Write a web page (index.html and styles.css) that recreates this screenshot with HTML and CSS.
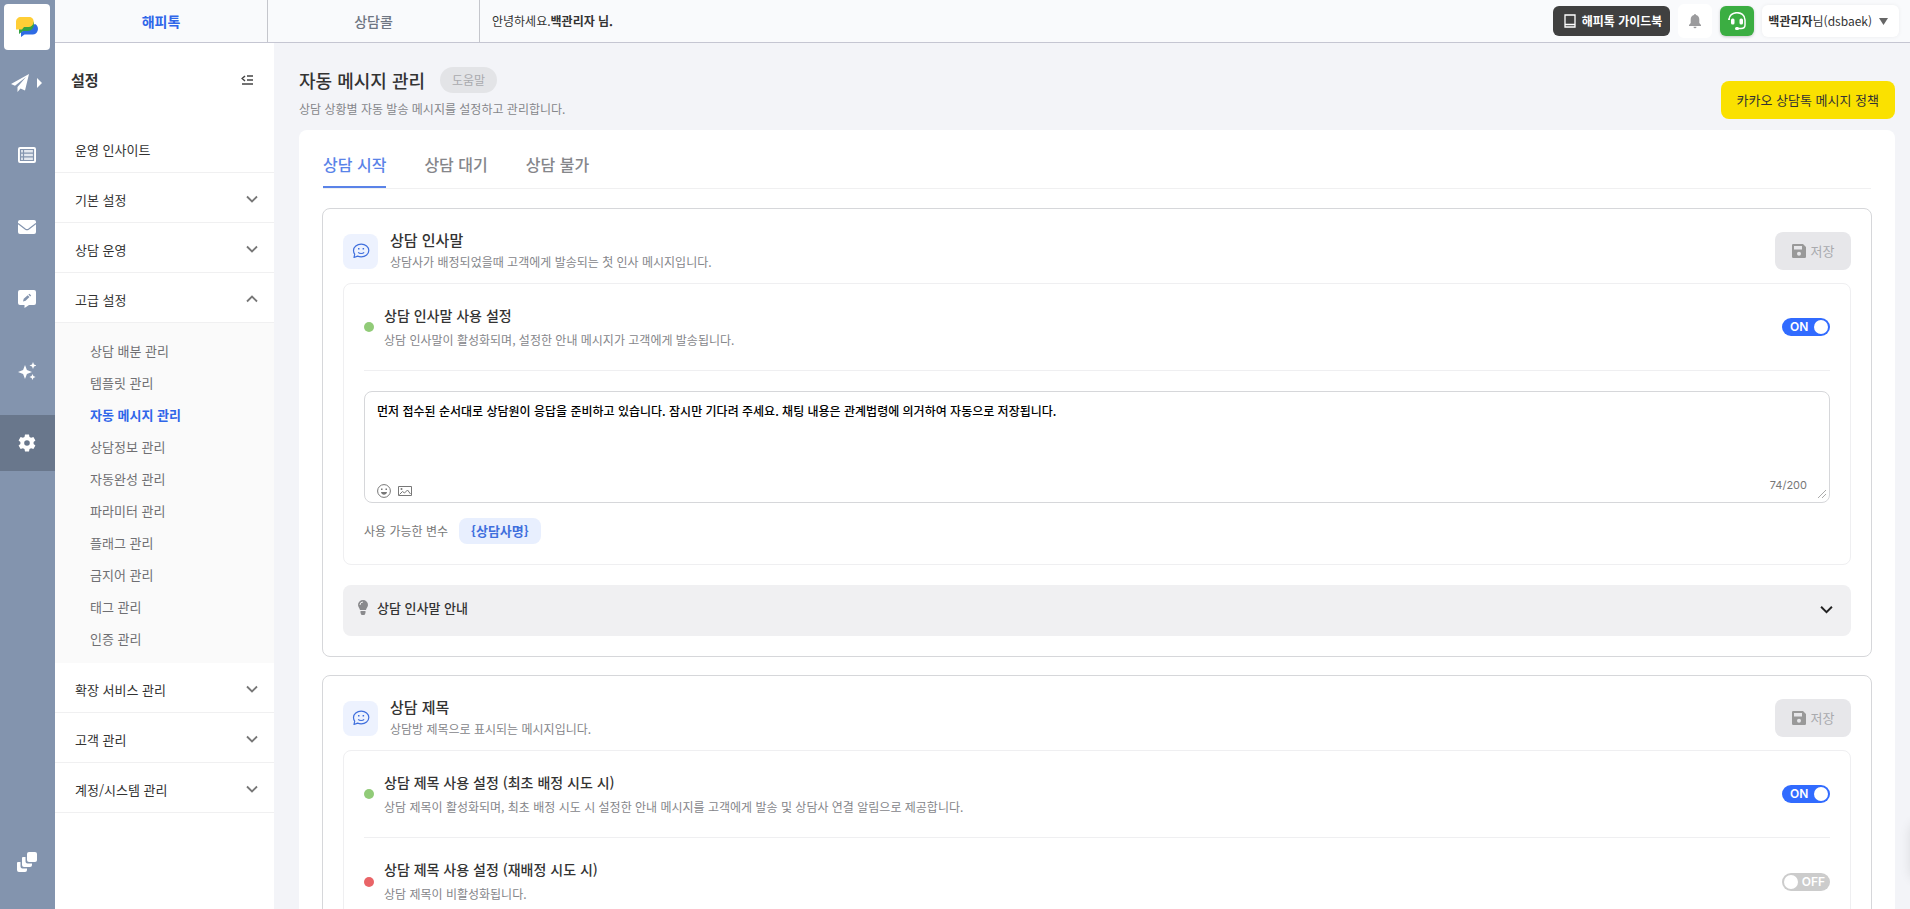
FILE: index.html
```html
<!DOCTYPE html>
<html lang="ko">
<head>
  <meta charset="UTF-8">
  <meta name="viewport" content="width=device-width, initial-scale=1">
  <title>자동 메시지 관리</title>
  <link rel="stylesheet" href="styles.css">
</head>
<body>

<!-- shared icons -->
<svg class="sprite" aria-hidden="true">
  <symbol id="i-down" viewBox="0 0 12 8"><path d="M1 1.5l5 5 5-5" fill="none" stroke="currentColor" stroke-width="1.8"/></symbol>
  <symbol id="i-save" viewBox="0 0 14 14"><path fill="currentColor" fill-rule="evenodd" d="M1.2 0H11l3 3v9.800a1.200 1.200 0 0 1-1.200 1.200H1.200A1.200 1.200 0 0 1 0 12.800V1.200A1.200 1.200 0 0 1 1.200 0zM2 2v3.500h8V2zM7 7.800a2 2 0 1 0 0 4 2 2 0 0 0 0-4z"/></symbol>
  <symbol id="i-smile" viewBox="0 0 18 16"><path d="M2 14.500l.7-3.300A6.300 6.300 0 0 1 1.500 7.500C1.500 4 5 1.200 9.200 1.200S16.800 4 16.800 7.500s-3.400 6.300-7.600 6.300a9 9 0 0 1-3.600-.7z" fill="none" stroke="currentColor" stroke-width="1.200" stroke-linejoin="round"/><path d="M6.200 9.300c1.300 1.600 4.600 1.600 5.900 0" fill="none" stroke="currentColor" stroke-width="1.200"/><path d="M6 5h1.500v1.500H6zM10.600 5h1.500v1.500h-1.500z" fill="currentColor"/></symbol>
</svg>

<div class="app">
  <nav class="rail" aria-label="주 메뉴">
    <a href="#" class="logo" aria-label="해피톡">
      <svg width="22" height="20" viewBox="0 0 22 20">
        <path fill="#2f6be4" d="M19 7c2.500 1 3.500 4 2.700 6.500-.7 2.500-2.500 4-5 4H8.500L5 20v-5z"/>
        <path fill="#35a343" d="M17.500 4.500c1.500 4.500-1 9.500-6 9.500H7l-4 3v-5z"/>
        <path fill="#ffce36" d="M5 0h8c3.500 0 5 2.500 4.500 5.500-.4 2.900-2.500 4.500-5 4.500H8l-2 2.500H0V5c0-3 2-5 5-5z"/>
      </svg>
    </a>
    <a href="#" class="rail-item send" aria-label="발송">
      <svg width="18" height="18" viewBox="0 0 18 18"><path fill="#fff" d="M18 0L0 10l4 1.800L15 3 6.500 12.900V18l3-3.500 4.500 2z"/></svg>
      <svg width="5" height="10" viewBox="0 0 5 10"><path fill="#fff" d="M0 0l5 5-5 5z"/></svg>
    </a>
    <a href="#" class="rail-item" aria-label="목록">
      <svg width="18" height="16" viewBox="0 0 18 16"><rect x="1" y="1" width="16" height="14" rx="1" fill="#e3e8ef" stroke="#fff" stroke-width="2"/><path d="M2.500 2.500h13v11h-13zM2.500 6.200h13M2.500 9.800h13M5.500 2.500v11" fill="none" stroke="#8394ae" stroke-width="1.200"/></svg>
    </a>
    <a href="#" class="rail-item" aria-label="메일">
      <svg width="18" height="14" viewBox="0 0 18 14"><rect width="18" height="14" rx="2" fill="#fff"/><path d="M0 3.500l7.500 5.700q1.500 1 3 0L18 3.500" fill="none" stroke="#8394ae" stroke-width="1.200"/></svg>
    </a>
    <a href="#" class="rail-item" aria-label="상담 메모">
      <svg width="18" height="18" viewBox="0 0 18 18"><path fill="#fff" d="M2 0h14a2 2 0 0 1 2 2v11a2 2 0 0 1-2 2h-5l-4.500 3v-3H2a2 2 0 0 1-2-2V2a2 2 0 0 1 2-2z"/><path fill="#8394ae" d="M5 11.500l.7-2.700 4-3.600 1.800 1.800-3.900 3.700zM10.400 4.600l1-.9 1.800 1.700-1 1z"/></svg>
    </a>
    <a href="#" class="rail-item" aria-label="AI">
      <svg width="18" height="18" viewBox="0 0 18 18"><path fill="#fff" d="M7 3l1.900 5L14 10l-5.100 2L7 17l-1.900-5L0 10l5.100-2zM15 0l1 2.500 2.500 1L16 4.500 15 7l-1-2.500-2.500-1 2.500-1zM14.500 12l.9 2.100 2.100.9-2.100.9-.9 2.100-.9-2.100-2.100-.9 2.100-.9z"/></svg>
    </a>
    <a href="#" class="rail-item active" aria-label="설정">
      <svg width="18" height="18" viewBox="0 0 18 18"><path fill="#fff" fill-rule="evenodd" d="M7 .5h4l.5 2.400 1.600.9 2.300-.8 2 3.500-1.800 1.600v1.800l1.800 1.600-2 3.500-2.300-.8-1.600.9-.5 2.400H7l-.5-2.400-1.600-.9-2.300.8-2-3.500 1.800-1.600V8.100L.6 6.500l2-3.500 2.300.8 1.600-.9zM9 6.200a2.800 2.800 0 1 0 0 5.600 2.800 2.800 0 0 0 0-5.600z"/></svg>
    </a>
    <a href="#" class="rail-item rail-bottom" aria-label="서비스 바로가기">
      <svg width="20" height="20" viewBox="0 0 20 20"><rect x="10" width="10" height="10" rx="2" fill="#fff"/><path fill="#fff" d="M6 5h2.500v4.500a2 2 0 0 0 2 2H15V13a2 2 0 0 1-2 2H7a2 2 0 0 1-2-2V6a1 1 0 0 1 1-1zM1 10h2.500v4.500a2 2 0 0 0 2 2H10V18a2 2 0 0 1-2 2H2a2 2 0 0 1-2-2v-7a1 1 0 0 1 1-1z"/></svg>
    </a>
  </nav>

  <div class="content">
    <header class="topbar">
      <a href="#" class="service on">해피톡</a>
      <a href="#" class="service">상담콜</a>
      <p class="hello">안녕하세요.<b>백관리자 님.</b></p>
      <div class="top-actions">
        <button class="guide-btn">
          <svg width="12" height="14" viewBox="0 0 12 14"><path d="M1 1h10v12H1zM1 10.500h10" fill="none" stroke="#fff" stroke-width="1.300"/></svg>
          해피톡 가이드북
        </button>
        <button class="bell-btn" aria-label="알림">
          <svg width="12" height="15" viewBox="0 0 12 15"><path fill="#9b9b9d" d="M6 0a1 1 0 0 1 1 1c2 .5 3.300 2 3.300 4.200V9L12 11v1H0v-1l1.700-2V5.200C1.700 3 3 1.500 5 1a1 1 0 0 1 1-1zM4.500 12.800h3a1.500 1.500 0 0 1-3 0z"/></svg>
        </button>
        <button class="help-btn" aria-label="상담 지원">
          <svg width="18" height="18" viewBox="0 0 18 18"><path d="M1 8C.500-1.500 17-2 17 8v5c0 2-1.500 3.500-4 3.500H9" fill="none" stroke="#fff" stroke-width="1.500"/><path d="M1 8V6.500" stroke="#fff" stroke-width="1.500"/><rect x="3" y="6.500" width="3.500" height="6" rx="1.500" fill="#fff"/><rect x="11.500" y="6.500" width="3.500" height="6" rx="1.500" fill="#fff"/><rect x="7" y="15" width="4" height="3" rx="1.500" fill="#fff"/></svg>
        </button>
        <button class="user-btn"><span><b>백관리자</b>님(dsbaek)</span>
          <svg width="9" height="7" viewBox="0 0 9 7"><path fill="#666" d="M0 0h9L4.500 7z"/></svg>
        </button>
      </div>
    </header>

    <div class="body">
      <aside class="sidebar">
        <div class="side-head">
          <h2>설정</h2>
          <button class="fold-btn" aria-label="메뉴 접기">
            <svg width="12" height="10" viewBox="0 0 12 10"><path d="M6 1h6M6 5h6M1 9h11M4 1L1.200 3.500 4 6" fill="none" stroke="#444" stroke-width="1.500"/></svg>
          </button>
        </div>
        <a href="#" class="menu">운영 인사이트</a>
        <button class="menu">기본 설정<svg class="chev"><use href="#i-down"/></svg></button>
        <button class="menu">상담 운영<svg class="chev"><use href="#i-down"/></svg></button>
        <button class="menu" aria-expanded="true">고급 설정<svg class="chev up"><use href="#i-down"/></svg></button>
        <ul class="submenu">
          <li><a href="#">상담 배분 관리</a></li>
          <li><a href="#">템플릿 관리</a></li>
          <li><a href="#" class="on">자동 메시지 관리</a></li>
          <li><a href="#">상담정보 관리</a></li>
          <li><a href="#">자동완성 관리</a></li>
          <li><a href="#">파라미터 관리</a></li>
          <li><a href="#">플래그 관리</a></li>
          <li><a href="#">금지어 관리</a></li>
          <li><a href="#">태그 관리</a></li>
          <li><a href="#">인증 관리</a></li>
        </ul>
        <button class="menu">확장 서비스 관리<svg class="chev"><use href="#i-down"/></svg></button>
        <button class="menu">고객 관리<svg class="chev"><use href="#i-down"/></svg></button>
        <button class="menu">계정/시스템 관리<svg class="chev"><use href="#i-down"/></svg></button>
      </aside>

      <main class="main">
        <div class="page-head">
          <div>
            <div class="title-row">
              <h1>자동 메시지 관리</h1>
              <button class="tip-btn">도움말</button>
            </div>
            <p class="desc">상담 상황별 자동 발송 메시지를 설정하고 관리합니다.</p>
          </div>
          <a href="#" class="kakao-btn">카카오 상담톡 메시지 정책</a>
        </div>

        <div class="panel">
          <div class="tabs" role="tablist">
            <button class="tab on" role="tab" aria-selected="true">상담 시작</button>
            <button class="tab" role="tab">상담 대기</button>
            <button class="tab" role="tab">상담 불가</button>
          </div>

          <section class="card">
            <div class="card-head">
              <span class="card-icon"><svg width="18" height="16"><use href="#i-smile"/></svg></span>
              <div class="card-title">
                <h3>상담 인사말</h3>
                <p class="desc">상담사가 배정되었을때 고객에게 발송되는 첫 인사 메시지입니다.</p>
              </div>
              <button class="save-btn" disabled><svg width="14" height="14"><use href="#i-save"/></svg>저장</button>
            </div>
            <div class="box">
              <div class="setting">
                <i class="dot"></i>
                <div class="setting-text">
                  <h4>상담 인사말 사용 설정</h4>
                  <p class="desc">상담 인사말이 활성화되며, 설정한 안내 메시지가 고객에게 발송됩니다.</p>
                </div>
                <label class="switch"><input type="checkbox" aria-label="상담 인사말 사용 설정" checked><span>ON</span></label>
              </div>
              <div class="editor">
                <textarea aria-label="상담 인사말">먼저 접수된 순서대로 상담원이 응답을 준비하고 있습니다. 잠시만 기다려 주세요. 채팅 내용은 관계법령에 의거하여 자동으로 저장됩니다.</textarea>
                <div class="editor-foot">
                  <button aria-label="이모티콘"><svg width="14" height="14" viewBox="0 0 14 14"><circle cx="7" cy="7" r="6.400" fill="none" stroke="#777" stroke-width="1"/><path d="M4 4.500h1.500V6H4zM8.500 4.500H10V6H8.500zM4 8h6c-.5 3.500-5.500 3.500-6 0z" fill="#777"/></svg></button>
                  <button aria-label="이미지"><svg width="14" height="10" viewBox="0 0 14 10"><path d="M.5.5h13v9H.5zM1.500 8.500l3-3 2 1.500L9.500 4l3 4" fill="none" stroke="#777"/><circle cx="3.500" cy="3" r="1" fill="#777"/></svg></button>
                  <span class="count">74/200</span>
                  <svg class="grip" width="8" height="8" viewBox="0 0 8 8"><path d="M0 8l8-8M4 8l4-4" stroke="#aaa"/></svg>
                </div>
              </div>
              <div class="vars">
                <span>사용 가능한 변수</span>
                <button class="chip">{상담사명}</button>
              </div>
            </div>
            <button class="guide">
              <svg width="10" height="15" viewBox="0 0 10 15"><path fill="#8a8a8d" d="M5 0a5 5 0 0 1 5 5c0 2-1.700 3.200-2 5H2C1.700 8.200 0 7 0 5a5 5 0 0 1 5-5zM2.500 11h5v2L6.500 15h-3l-1-2z"/><path d="M2 5a3 3 0 0 1 3-3" fill="none" stroke="#eee"/></svg>
              <span>상담 인사말 안내</span>
              <svg class="guide-chev" width="13" height="9"><use href="#i-down"/></svg>
            </button>
          </section>

          <section class="card">
            <div class="card-head">
              <span class="card-icon"><svg width="18" height="16"><use href="#i-smile"/></svg></span>
              <div class="card-title">
                <h3>상담 제목</h3>
                <p class="desc">상담방 제목으로 표시되는 메시지입니다.</p>
              </div>
              <button class="save-btn" disabled><svg width="14" height="14"><use href="#i-save"/></svg>저장</button>
            </div>
            <div class="box">
              <div class="setting">
                <i class="dot"></i>
                <div class="setting-text">
                  <h4>상담 제목 사용 설정 (최초 배정 시도 시)</h4>
                  <p class="desc">상담 제목이 활성화되며, 최초 배정 시도 시 설정한 안내 메시지를 고객에게 발송 및 상담사 연결 알림으로 제공합니다.</p>
                </div>
                <label class="switch"><input type="checkbox" aria-label="최초 배정 시도 시 상담 제목 사용" checked><span>ON</span></label>
              </div>
              <div class="setting">
                <i class="dot off"></i>
                <div class="setting-text">
                  <h4>상담 제목 사용 설정 (재배정 시도 시)</h4>
                  <p class="desc">상담 제목이 비활성화됩니다.</p>
                </div>
                <label class="switch"><input type="checkbox" aria-label="재배정 시도 시 상담 제목 사용"><span>OFF</span></label>
              </div>
            </div>
          </section>
        </div>
      </main>
    </div>
  </div>
</div>
<div class="side-widget"></div>

</body>
</html>
```
FILE: styles.css
```css
* {
  box-sizing: border-box;
}

body {
  margin: 0;
  font-family: "Noto Sans CJK KR", "Noto Sans", sans-serif;
  font-size: 13px;
  line-height: 20px;
  color: #333;
  background: #f3f4f8;
  overflow: hidden;
}

h1, h2, h3, h4, p, ul {
  margin: 0;
  padding: 0;
}

button {
  font: inherit;
  color: inherit;
  border: none;
  background: none;
  padding: 0;
  cursor: pointer;
}

a {
  color: inherit;
  text-decoration: none;
}

svg {
  flex: none;
}

.sprite {
  display: none;
}

.app {
  display: flex;
  height: 100vh;
}

/* left icon rail */
.rail {
  width: 55px;
  flex: none;
  display: flex;
  flex-direction: column;
  gap: 16px;
  padding: 4px 0 19px;
  background: #8394ae;
}

.logo {
  width: 46px;
  height: 46px;
  margin: 0 0 -11px 4px;
  display: flex;
  align-items: center;
  justify-content: center;
  background: #fff;
  border-radius: 4px;
}

.rail-item {
  height: 56px;
  padding-right: 2px;
  display: flex;
  align-items: center;
  justify-content: center;
}

.send {
  gap: 8px;
}

.rail-item.active {
  background: #69778c;
}

.rail-bottom {
  margin-top: auto;
}

.content {
  flex: 1;
  min-width: 0;
  display: flex;
  flex-direction: column;
}

/* top bar */
.topbar {
  height: 43px;
  flex: none;
  display: flex;
  align-items: stretch;
  background: #f9fafc;
  border-bottom: 1px solid #c5c6d2;
}

.service {
  width: 212px;
  display: flex;
  align-items: center;
  justify-content: center;
  font-size: 14px;
  font-weight: 500;
  color: #6f7683;
  border-right: 1px solid #c5c6cc;
}

.service.on {
  width: 213px;
  color: #2f66e9;
  font-weight: 700;
}

.hello {
  align-self: center;
  padding-left: 12px;
  font-size: 12px;
}

.top-actions {
  margin-left: auto;
  padding-right: 11px;
  display: flex;
  align-items: center;
  gap: 8px;
}

.top-actions button {
  display: flex;
  align-items: center;
  justify-content: center;
  height: 30px;
  border-radius: 6px;
  font-size: 12px;
}

.top-actions .guide-btn {
  gap: 6px;
  padding: 0 8px 0 11px;
  color: #fff;
  font-weight: 700;
  background: #404040;
}

.top-actions .bell-btn {
  width: 34px;
  height: 34px;
  background: #fff;
}

.top-actions .help-btn {
  width: 34px;
  background: #3bae42;
  box-shadow: 0 1px 3px rgba(0, 0, 0, 0.2);
}

.top-actions .user-btn {
  height: 32px;
  gap: 7px;
  padding: 0 11px 0 6px;
  background: #fff;
  box-shadow: 0 0 4px rgba(0, 0, 0, 0.06);
}

.body {
  flex: 1;
  min-height: 0;
  display: flex;
}

/* settings menu */
.sidebar {
  width: 219px;
  flex: none;
  background: #fff;
}

.side-head {
  height: 80px;
  padding: 0 21px 6px 16px;
  display: flex;
  align-items: center;
  justify-content: space-between;
}

.side-head h2 {
  font-size: 15px;
}

.fold-btn {
  display: flex;
}

.menu {
  width: 100%;
  height: 50px;
  padding: 4px 16px 0 20px;
  display: flex;
  align-items: center;
  justify-content: space-between;
  border-bottom: 1px solid #f0f0f1;
}

.chev {
  width: 12px;
  height: 8px;
  margin-bottom: 2px;
  color: #777;
}

.chev.up {
  transform: rotate(180deg);
}

.submenu {
  padding: 12px 0 8px;
  list-style: none;
  background: #fafafa;
}

.submenu a {
  display: block;
  padding-left: 35px;
  line-height: 32px;
  color: #6f6f72;
}

.submenu a.on {
  color: #2f66e9;
  font-weight: 700;
}

/* page */
.main {
  flex: 1;
  min-width: 0;
  padding: 21px 15px 24px 25px;
  overflow-y: auto;
  scrollbar-width: none;
}

.page-head {
  display: flex;
  justify-content: space-between;
  align-items: flex-end;
  padding-bottom: 11px;
}

.title-row {
  display: flex;
  align-items: center;
  gap: 15px;
  height: 32px;
  margin-bottom: 3px;
}

.title-row h1 {
  font-size: 18px;
  font-weight: 500;
}

.tip-btn {
  height: 26px;
  padding: 0 12px;
  border-radius: 13px;
  font-size: 12px;
  color: #a9aaae;
  background: #e3e4e7;
}

.desc {
  font-size: 12px;
  color: #85868a;
}

.kakao-btn {
  height: 38px;
  padding: 0 16px;
  display: flex;
  align-items: center;
  border-radius: 8px;
  background: #fae100;
}

.panel {
  padding: 12px 23px 24px;
  background: #fff;
  border-radius: 8px;
}

.tabs {
  display: flex;
  gap: 38px;
  margin: 0 1px 19px;
  border-bottom: 1px solid #f0f0f1;
}

.tab {
  height: 46px;
  font-size: 16px;
  font-weight: 500;
  color: #85868a;
  border-bottom: 2px solid transparent;
}

.tab.on {
  color: #5a83e8;
  border-color: #5a83e8;
}

.card {
  margin-bottom: 18px;
  padding: 20px;
  border: 1px solid #d6d7da;
  border-radius: 8px;
}

.card-head {
  display: flex;
  align-items: center;
  height: 44px;
  margin-bottom: 10px;
}

.card-icon {
  width: 35px;
  height: 35px;
  display: flex;
  align-items: center;
  justify-content: center;
  color: #3f6fdd;
  background: #edf2fe;
  border-radius: 8px;
}

.card-title {
  flex: 1;
  padding: 0 0 2px 12px;
}

.card-title h3 {
  font-size: 15px;
  font-weight: 500;
  line-height: 24px;
}

.save-btn {
  width: 76px;
  height: 38px;
  display: flex;
  align-items: center;
  justify-content: center;
  gap: 5px;
  color: #a9aaae;
  background: #e7e7ea;
  border-radius: 8px;
}

.save-btn svg {
  color: #999;
}

.box {
  padding: 0 20px;
  border: 1px solid #efeff1;
  border-radius: 8px;
}

.setting {
  height: 87px;
  display: flex;
  align-items: center;
  border-bottom: 1px solid #efeff1;
}

.setting:last-child {
  border-bottom: none;
}

.dot {
  width: 10px;
  height: 10px;
  border-radius: 50%;
  background: #91cb78;
}

.dot.off {
  background: #e96467;
}

.setting-text {
  flex: 1;
  padding: 0 0 2px 10px;
}

.setting-text h4 {
  margin-bottom: 3px;
  font-size: 14px;
  font-weight: 500;
  line-height: 24px;
}

.switch {
  position: relative;
  width: 48px;
  height: 18px;
  display: block;
}

.switch input {
  appearance: none;
  width: 48px;
  height: 18px;
  margin: 0;
  display: block;
  border-radius: 9px;
  background: #ccc;
  cursor: pointer;
}

/* knob and caption sit on top of the track */
.switch input::after {
  content: "";
  position: absolute;
  top: 2px;
  left: 2px;
  width: 14px;
  height: 14px;
  border-radius: 50%;
  background: #fff;
}

.switch input:checked {
  background: #316bff;
}

.switch input:checked::after {
  left: 32px;
}

.switch span {
  position: absolute;
  top: 0;
  right: 5px;
  font-family: Inter, sans-serif;
  font-size: 12px;
  font-weight: 600;
  line-height: 18px;
  color: #fff;
  pointer-events: none;
}

.switch input:checked + span {
  right: auto;
  left: 8px;
}

.editor {
  margin-top: 20px;
  border: 1px solid #d6d7da;
  border-radius: 8px;
}

.editor textarea {
  width: 100%;
  height: 80px;
  display: block;
  padding: 9px 12px 0;
  border: none;
  outline: none;
  resize: none;
  background: none;
  font: inherit;
  font-size: 12px;
  font-weight: 500;
  color: #000;
}

.editor-foot {
  display: flex;
  align-items: center;
  gap: 7px;
  height: 30px;
  padding: 0 3px 4px 12px;
}

.editor-foot button {
  display: flex;
  align-self: flex-end;
  height: 14px;
  align-items: center;
}

.count {
  margin-left: auto;
  margin-right: 4px;
  font-family: Inter, sans-serif;
  font-size: 11px;
  color: #777;
}

.grip {
  align-self: flex-end;
}

.vars {
  display: flex;
  align-items: center;
  gap: 11px;
  padding: 15px 0 20px;
  font-size: 12px;
  color: #777;
}

.chip {
  height: 26px;
  padding: 0 12px;
  font-size: 13px;
  font-weight: 700;
  color: #3f6fdd;
  background: #e8effe;
  border-radius: 8px;
}

.guide {
  width: 100%;
  height: 51px;
  margin-top: 20px;
  padding: 0 18px 6px 15px;
  display: flex;
  align-items: center;
  gap: 9px;
  font-weight: 500;
  background: #f0f0f2;
  border-radius: 8px;
}

.guide-chev {
  margin: 4px 0 0 auto;
  color: #222;
}

/* collapsed widget, only its shadow shows at the window edge */
.side-widget {
  position: fixed;
  left: 100%;
  bottom: 28px;
  width: 60px;
  height: 60px;
  border-radius: 12px;
  box-shadow: 0 0 12px rgba(0, 0, 0, 0.1);
}
```
